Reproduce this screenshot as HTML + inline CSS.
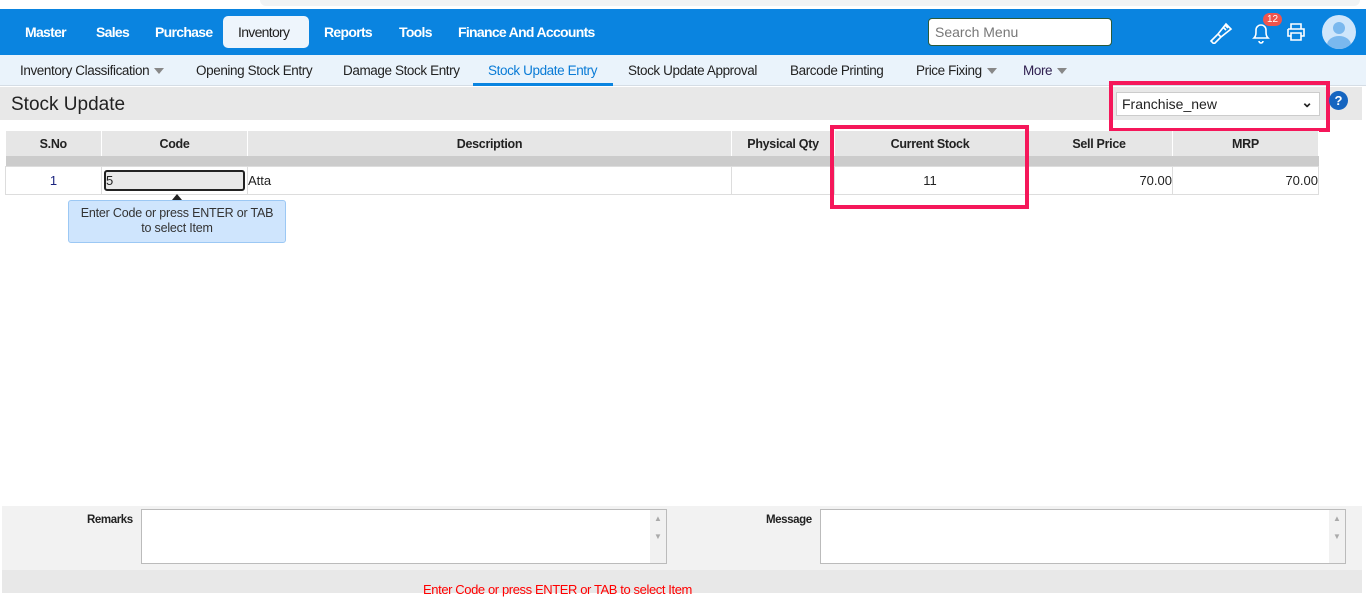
<!DOCTYPE html>
<html><head><style>
*{box-sizing:border-box;margin:0;padding:0}
body{width:1366px;height:593px;overflow:hidden;background:#fff;font-family:"Liberation Sans",sans-serif;font-size:13px;color:#222;position:relative}
.abs{position:absolute}
.nav{top:9px;left:0;width:1366px;height:46px;background:#0a84e0}
.nav span{position:absolute;top:15px;color:#fff;font-weight:bold;font-size:14px;letter-spacing:-0.7px}
.sub{top:55px;left:0;width:1366px;height:31px;background:#eaf3fb;border-bottom:1px solid #d5dde5}
.sub span{position:absolute;top:8px;font-size:13.5px;color:#222;letter-spacing:-0.4px}
.caret{display:inline-block;width:0;height:0;border-left:5px solid transparent;border-right:5px solid transparent;border-top:6px solid #888;margin-left:5px;vertical-align:middle}
table{position:absolute;left:5px;top:131px;border-collapse:collapse;width:1314px}
th{background:#e6e6e6;height:25px;font-size:12.5px;border-right:1px solid #fff;font-weight:bold;color:#222;letter-spacing:-0.3px}
td{height:28px;border:1px solid #ddd;font-size:13px}
</style></head><body>
<div class="abs" style="top:0;left:260px;width:1100px;height:6px;background:#f1f3f4;border-radius:0 0 6px 6px"></div>
<div class="abs nav">
<span style="left:25px">Master</span><span style="left:96px">Sales</span><span style="left:155px">Purchase</span>
<div class="abs" style="left:223px;top:7px;width:86px;height:32px;background:#eef5fc;border-radius:5px"></div>
<span style="left:238px;color:#222;font-weight:normal">Inventory</span>
<span style="left:324px">Reports</span><span style="left:399px">Tools</span><span style="left:458px">Finance And Accounts</span>
<div class="abs" style="left:928px;top:9px;width:184px;height:28px;background:#fff;border:1px solid #2a5a3a;border-radius:4px;color:#777;font-size:14px;padding:5px 6px">Search Menu</div>
<svg class="abs" style="left:1208px;top:11px" width="26" height="24" viewBox="0 0 26 24" fill="none" stroke="#fff" stroke-width="1.6"><path d="M3 21l7-7 3 3-7 7z M10 14l8-10 5 5-10 8 M15 7l3 3 M17 5l3 3"/></svg>
<svg class="abs" style="left:1250px;top:11px" width="22" height="26" viewBox="0 0 22 26" fill="none" stroke="#fff" stroke-width="1.6"><path d="M4 18c2-2 2-4 2-8a5 5 0 0110 0c0 4 0 6 2 8z M9 21a2 2 0 004 0"/></svg>
<div class="abs" style="left:1263px;top:4px;width:19px;height:13px;background:#f0544c;border-radius:7px;color:#fff;font-size:10px;text-align:center;line-height:13px">12</div>
<svg class="abs" style="left:1286px;top:13px" width="20" height="20" viewBox="0 0 20 20" fill="none" stroke="#fff" stroke-width="1.6"><path d="M5 7V2h10v5 M2 7h16v7h-3 M5 14H2V7 M5 11h10v7H5z"/></svg>
<div class="abs" style="left:1322px;top:6px;width:34px;height:34px;border-radius:50%;background:#cfe6fb;overflow:hidden"><div class="abs" style="left:11px;top:7px;width:12px;height:12px;border-radius:50%;background:#7ab8ee"></div><div class="abs" style="left:5px;top:21px;width:24px;height:18px;border-radius:50%;background:#7ab8ee"></div></div>
</div>
<div class="abs sub">
<span style="left:20px">Inventory Classification<i class="caret"></i></span>
<span style="left:196px">Opening Stock Entry</span>
<span style="left:343px">Damage Stock Entry</span>
<span style="left:488px;color:#0a7bd6">Stock Update Entry</span>
<div class="abs" style="left:473px;top:28px;width:140px;height:3px;background:#0a84e0"></div>
<span style="left:628px">Stock Update Approval</span>
<span style="left:790px">Barcode Printing</span>
<span style="left:916px">Price Fixing<i class="caret"></i></span>
<span style="left:1023px;color:#302050">More<i class="caret"></i></span>
</div>
<div class="abs" style="top:87px;left:0;width:1362px;height:33px;background:#e8e8e8"></div>
<div class="abs" style="top:94px;left:11px;font-size:19px;color:#222">Stock Update</div>
<div class="abs" style="left:1116px;top:92px;width:204px;height:24px;background:#fff;border:1px solid #ccc;font-size:14px;padding:3px 5px">Franchise_new<span style="position:absolute;right:6px;top:1px;font-weight:bold">&#8964;</span></div>
<div class="abs" style="left:1109px;top:81px;width:221px;height:51px;border:4px solid #f5175a"></div>
<div class="abs" style="left:1329px;top:91px;width:19px;height:19px;border-radius:50%;background:#1565c0;color:#fff;font-weight:bold;font-size:13px;text-align:center;line-height:19px">?</div>
<table>
<tr><th style="width:96px">S.No</th><th style="width:146px">Code</th><th style="width:484px">Description</th><th style="width:103px">Physical Qty</th><th style="width:191px">Current Stock</th><th style="width:147px">Sell Price</th><th>MRP</th></tr>
<tr><td colspan="7" style="height:10px;background:#ccc;border:none"></td></tr>
<tr><td style="text-align:center;color:#1a237e">1</td><td style="padding:2px"><div style="border:2px solid #222;border-radius:3px;background:#e8e8e8;height:21px;font-size:13px;line-height:17px">5</div></td><td>Atta</td><td></td><td style="text-align:center">11</td><td style="text-align:right">70.00</td><td style="text-align:right">70.00</td></tr>
</table>
<div class="abs" style="left:830px;top:125px;width:199px;height:84px;border:4px solid #f5175a"></div>
<div class="abs" style="left:172px;top:194px;width:0;height:0;border-left:5px solid transparent;border-right:5px solid transparent;border-bottom:6px solid #222"></div>
<div class="abs" style="left:68px;top:200px;width:218px;height:43px;background:#cfe5fd;border:1px solid #9cc8f4;border-radius:3px;text-align:center;font-size:12.5px;letter-spacing:-0.2px;line-height:15px;padding-top:5px;color:#333">Enter Code or press ENTER or TAB<br>to select Item</div>
<div class="abs" style="left:2px;top:506px;width:1360px;height:64px;background:#f2f2f2"></div>
<div class="abs" style="left:87px;top:514px;font-size:11.5px;font-weight:bold;color:#222;letter-spacing:-0.4px">Remarks</div>
<div class="abs" style="left:141px;top:509px;width:526px;height:55px;background:#fff;border:1px solid #bbb"><div class="abs" style="right:0;top:0;width:16px;height:53px;background:#f1f1f1;color:#aaa;font-size:8px;text-align:center;line-height:18px">▲<br>▼</div></div>
<div class="abs" style="left:766px;top:514px;font-size:11.5px;font-weight:bold;color:#222;letter-spacing:-0.4px">Message</div>
<div class="abs" style="left:820px;top:509px;width:526px;height:55px;background:#fff;border:1px solid #bbb"><div class="abs" style="right:0;top:0;width:16px;height:53px;background:#f1f1f1;color:#aaa;font-size:8px;text-align:center;line-height:18px">▲<br>▼</div></div>
<div class="abs" style="left:2px;top:570px;width:1360px;height:23px;background:#e8e8e8"></div>
<div class="abs" style="left:423px;top:582px;font-size:13px;color:#f00;letter-spacing:-0.4px">Enter Code or press ENTER or TAB to select Item</div>
</body></html>
